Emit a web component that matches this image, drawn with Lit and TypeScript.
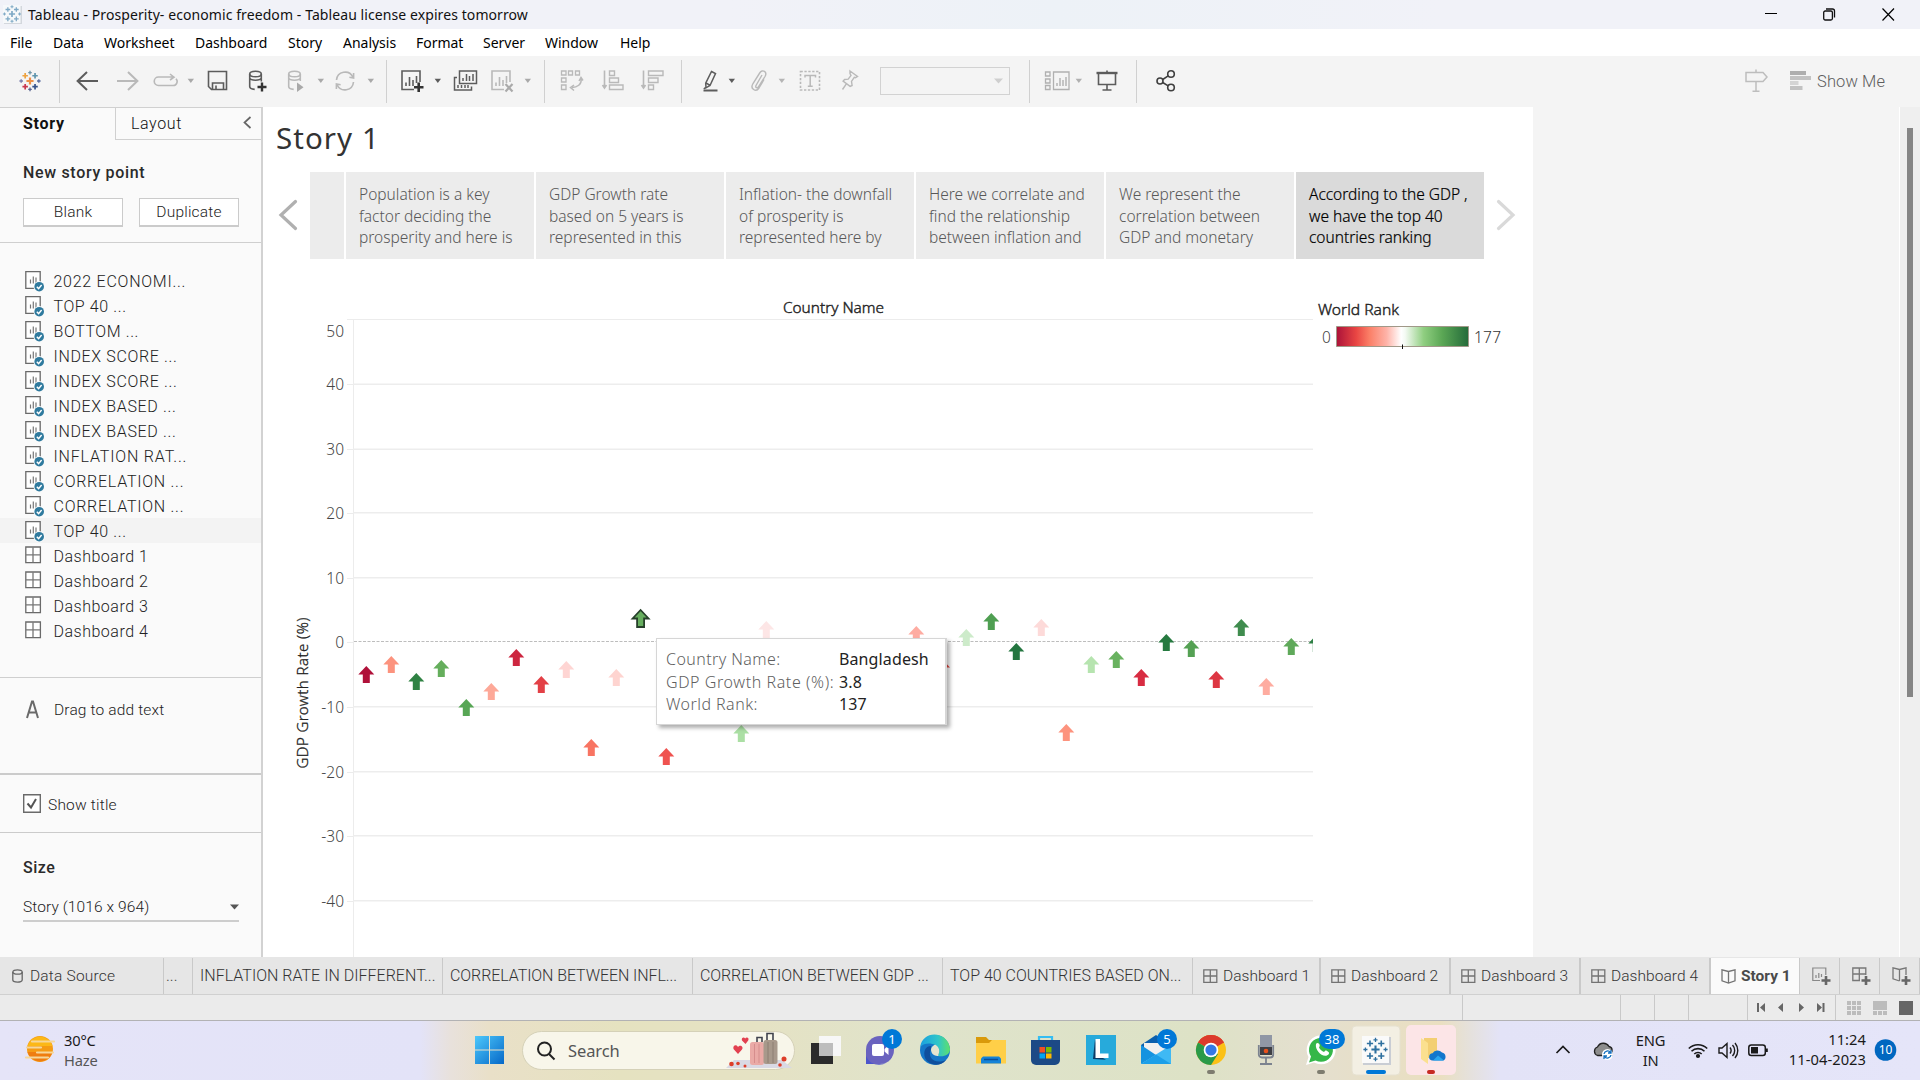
import { LitElement, html, css, svg } from "lit";
import { customElement } from "lit/decorators.js";

const plus = (x: number, y: number, r: number, c: string, w = 1.6) =>
  svg`<path d="M${x - r} ${y}h${r * 2}M${x} ${y - r}v${r * 2}" stroke=${c} stroke-width=${w} fill="none"/>`;

const burst = (cx: number, cy: number, k: number, p: string[], w: number) => svg`
  ${plus(cx, cy, 3.4 * k, p[0], w * 1.3)}
  ${plus(cx, cy - 8 * k, 1.7 * k, p[1], w * 0.8)}${plus(cx, cy + 8 * k, 1.7 * k, p[2], w * 0.8)}
  ${plus(cx - 8.4 * k, cy, 1.7 * k, p[3], w * 0.8)}${plus(cx + 8.4 * k, cy, 1.7 * k, p[4], w * 0.8)}
  ${plus(cx - 4.6 * k, cy - 5 * k, 2.6 * k, p[5], w)}${plus(cx + 4.8 * k, cy - 5 * k, 2.6 * k, p[6], w)}
  ${plus(cx - 4.6 * k, cy + 5.4 * k, 2.6 * k, p[7], w)}${plus(cx + 4.8 * k, cy + 5.4 * k, 2.6 * k, p[8], w)}`;

const blues = Array(9).fill("#4a86ad");
const D = "#5c5c5c";
const L = "#b9b9b9";

const icon = (w: number, body: unknown, c = D) =>
  html`<svg class="ic" width=${w} height="24" viewBox="0 0 ${w} 24" fill="none" stroke=${c} stroke-width="1.6">${body}</svg>`;
const caret = (c: string) => html`<svg class="ic" width="8" height="24" viewBox="0 0 8 24"><path d="M.6 9.8h6.4L3.8 14z" fill=${c}/></svg>`;
const sep = html`<i class="sep"></i>`;

const toolbar = [
  icon(20, burst(10, 12, 1.05, ["#ee8f45", "#6f95a8", "#5a6591", "#7a7fae", "#5a6ea0", "#eda23f", "#5f95ad", "#c9384f", "#37548c"], 1.7)),
  sep,
  icon(22, svg`<path d="M22 12H2M11 3l-9.4 9L11 21" stroke-width="2"/>`),
  icon(22, svg`<path d="M0 12h20M11 3l9.4 9-9.4 9" stroke-width="2"/>`, L),
  icon(26, svg`<path d="M20 8H5.500a4 4 0 0 0 0 8.500H20a4 4 0 0 0 3-6.800M17 5l4 3.200L17 11"/>`, L),
  caret("#a9a9a9"),
  icon(21, svg`<path d="M1.500 2.500h18v18h-15l-3-3zM5.500 20.500v-6.500h11v6.500M9 20v-3.500"/>`),
  icon(19, svg`<ellipse cx="7.500" cy="5" rx="5.800" ry="2.800"/><path d="M1.700 5v12.500c0 1.600 2 2.700 5 2.900M13.300 5v7.500M1.700 9c1 3 10.500 3 11.600 0"/><path d="M9.500 18h9M14 13.500v9" stroke="#333" stroke-width="2.400"/>`),
  icon(17, svg`<ellipse cx="7.500" cy="5" rx="5.800" ry="2.800"/><path d="M1.700 5v12.500c0 1.600 2 2.700 5 2.900M13.300 5v7M1.700 9c1 3 10.500 3 11.600 0"/><path d="M10 13.500l6.500 4.700-6.500 4.800z" fill="#a9a9a9" stroke="none"/>`, L),
  caret("#a9a9a9"),
  icon(22, svg`<path d="M2.500 11a8.600 8.600 0 0 1 16.300-3M19.500 13a8.600 8.600 0 0 1-16.300 3M19.600 4v5l-4.200-.8M2.400 20v-5l4.200.8"/>`, L),
  caret("#a9a9a9"),
  sep,
  icon(24, svg`<path d="M14 20.500H2v-18.500h18V13M6 17v-3.500M9.500 17V8M13 17v-6M16.500 14V7"/><path d="M14 18.300h9.500M18.700 13.500v9.500" stroke="#333" stroke-width="2.600"/>`),
  caret("#5c5c5c"),
  icon(24, svg`<path d="M6.500 2h17v12.500h-17zM10 12V9M13.500 12V5M16.500 12V7M20 12V5M4 8.500H1.500V21h17v-3.500M5 19v-3M8.500 19v-3M12 19v-3M15 19v-3" stroke-width="1.500"/>`),
  icon(24, svg`<path d="M14 20.500H2v-18.500h18V13M6 17v-3.500M9.500 17V8M13 17v-6M16.500 14V7"/><path d="M15.500 15l7 7.500M22.500 15l-7 7.500" stroke="#aaa" stroke-width="2.200"/>`, L),
  caret("#a9a9a9"),
  sep,
  icon(23, svg`<path d="M1.500 2h4.500v4H1.500zM8.500 2h4v4h-4zM15.500 2h4v4h-4zM1.500 9h4.500v4H1.500zM1.500 16h4.500v4.500H1.500z" stroke-width="1.300"/><path d="M21 9.500c1 6-4 9-9 9M19 12l2-3.500 2 3M14 16l-3.500 2.500L14 21.500" stroke-width="1.500"/>`, L),
  icon(22, svg`<path d="M2.500 1.500v17M.5 16l2 3 2-3"/><path d="M7.500 2h5v4.500h-5zM7.500 9h9v4.500h-9zM7.500 16h13.500v4.500H7.500z" stroke-width="1.400"/>`, L),
  icon(23, svg`<path d="M2.500 1.500v17M.5 16l2 3 2-3"/><path d="M7.500 2h14.500v4.500H7.500zM7.500 9h9.500v4.500H7.500zM7.500 16h5v4.500h-5z" stroke-width="1.400"/>`, L),
  sep,
  icon(17, svg`<path d="M1.500 21.500h14" stroke-width="2"/><path d="M9.500 2.500l4 2L8 16.500l-4 2.300-.3-4.600zM4 14l3.800 2.200M3.500 18.500l-1.700 1.500" stroke-width="1.500"/>`),
  caret("#5c5c5c"),
  icon(17, svg`<path d="M12 6L6 16.500c-1 2.300 1.500 3.200 2.600 1.200L15 7.500c2.600-4.500-2.400-8-5.300-3.500L3 14.500c-3.300 5.500 3 9 6 4.500l5-8.500" stroke-width="1.400"/>`, L),
  caret("#b5b5b5"),
  icon(22, svg`<path d="M1.500 2.500h19v18.500h-19z" stroke-dasharray="2.300 1.600"/><path d="M6 8.500V6.500h10.500v2M11.200 6.500V17M8.800 17.300h4.900" stroke-width="1.500"/>`, L),
  icon(18, svg`<path d="M9 2l7.500 5.500-2 1.200-1.200-.4-2.800 4 .6 4.200-2 .9-7-5.300 1.500-1.600 3.600-.3L10 6.500 9 4.500zM5.500 14.600L1.500 20.500" stroke-width="1.400"/>`, L),
  html`<span class="combo"><svg width="9" height="6"><path d="M0 .5h9L4.500 5.500z" fill="#cfcfcf"/></svg></span>`,
  sep,
  icon(26, svg`<path d="M1.500 3h4.500v4H1.500zM1.500 10h4.500v4H1.500zM1.500 16.500h4.500v4H1.500zM9.500 3h15.500v17.500H9.500z" stroke-width="1.300"/><path d="M13 17v-3M16 17V9M19 17v-6M22 17V8" stroke-width="1.400"/>`, "#b0b0b0"),
  caret("#b0b0b0"),
  icon(22, svg`<path d="M.5 4h21" stroke-width="2.400"/><path d="M2.500 4v11.500h17V4M11 1.500V4M11 15.500v5M6.500 21h9"/>`),
  sep,
  icon(20, svg`<circle cx="4" cy="12" r="3"/><circle cx="15" cy="5" r="3.300"/><circle cx="15" cy="18.500" r="3.300"/><path d="M6.700 10.500l5.500-3.600M6.700 13.500l5.500 3.400"/>`, "#3f3f3f"),
  icon(24, svg`<path d="M2 3.500h17l4 4.500-4 4.500H2zM12 .5v3M12 12.500v10M8.500 22.300h7" stroke-width="1.500"/>`, "#bdbdbd"),
  html`<svg class="ic" width="21" height="24"><g fill="#c2c2c2"><path d="M0 2h16v4H0z" fill="#aeaeae"/><path d="M0 7h21v4H0zM0 17h12.500v4H0z"/><path d="M0 12h8.500v4H0z" fill="#d4d4d4"/></g></svg>`,
  html`<span class="showme">Show Me</span>`,
];

const sheets: [string, string][] = [
  ["2022 ECONOMI...", "s-long"], ["TOP 40 ...", "s-top"], ["BOTTOM ...", "s-top"],
  ["INDEX SCORE ...", "s-idx"], ["INDEX SCORE ...", "s-idx"], ["INDEX BASED ...", "s-idx"], ["INDEX BASED ...", "s-idx"],
  ["INFLATION RAT...", "s-inf"], ["CORRELATION ...", "s-long"], ["CORRELATION ...", "s-long"], ["TOP 40 ...", "s-top"],
];
const boards = ["Dashboard 1", "Dashboard 2", "Dashboard 3", "Dashboard 4"];

const sheetIcon = html`<svg width="29" height="25" viewBox="0 0 29 25" fill="none">
  <path d="M.8 3.700h14.400v16.600H.8z" fill="#fff" stroke="#6a6a6a" stroke-width="1.300"/><path d="M5.500 15.500v-4M8.300 15.500v-7M11 15.500v-6" stroke="#777" stroke-width="1.200"/>
  <circle cx="14.200" cy="18.700" r="5.600" fill="#fafafa"/><circle cx="14.200" cy="18.700" r="4.800" fill="#2f7a9e"/><path d="M11.800 18.800l1.800 1.800 3-3.600" stroke="#fff" stroke-width="1.400"/></svg>`;
const gridIcon = html`<svg width="29" height="25" viewBox="0 0 29 25" fill="none"><path d="M.8 4h14.600v15.600H.8z" fill="#fff" stroke="#6a6a6a" stroke-width="1.300"/><path d="M8 4.300v15M1 11.800h14" stroke="#777" stroke-width="1.300"/></svg>`;
const tabGrid = html`<svg width="20" height="15" viewBox="0 0 20 15" fill="none"><path d="M.8 .8h13v12.600H.8zM7.300 1v12.500M1 7h12.800" stroke="#737373" stroke-width="1.300"/></svg>`;
const book = svg`<path d="M7.500 2.500v11.500M7.500 2.500L1 .8v11L7.500 14l6.500-2.200v-11z" stroke="#737373" stroke-width="1.300" fill="none"/>`;

const points = [
  ["Population is a key", "factor deciding the", "prosperity and here is"],
  ["GDP Growth rate", "based on 5 years is", "represented in this"],
  ["Inflation- the downfall", "of prosperity is", "represented here by"],
  ["Here we correlate and", "find the relationship", "between inflation and"],
  ["We represent the", "correlation between", "GDP and monetary"],
  ["According to the GDP ,", "we have the top 40", "countries ranking"],
];

const marks: [number, number, string][] = [
  [366.3, 666, "#b0113a"], [391.3, 656, "#fc937e"], [416.3, 673, "#2f8243"], [441.3, 660, "#65ae5c"],
  [466.3, 699, "#57a655"], [491.3, 683, "#fda898"], [516.3, 649, "#cd2640"], [541.3, 676, "#e34046"],
  [566.3, 661, "#fed5d3"], [591.3, 739, "#f87462"], [616.3, 669, "#fed4d0"],
  [666.3, 748, "#ef5350"], [741.3, 725, "#abdfa4"], [766.3, 621, "#fde6e6"], [916.3, 626, "#feaca2"], [942, 659, "#e8453f"],
  [966.3, 629, "#cdebca"], [991.3, 613, "#4f9f52"], [1016.3, 643, "#247640"], [1041.3, 619, "#fddad9"],
  [1066.3, 724, "#fd937e"], [1091.3, 656, "#b6e4af"], [1116.3, 651, "#69b260"], [1141.3, 669, "#d82c42"],
  [1166.3, 634, "#267a40"], [1191.3, 640, "#55a154"], [1216.3, 671, "#dd3743"], [1241.3, 619, "#3f8c4e"],
  [1266.3, 678, "#feaca0"], [1291.3, 638, "#5fa95a"], [1316.3, 635, "#2e8045"],
];
const arrow = (x: number, y: number) => `M${x} ${y}l8 8.500h-4.500v8.500h-7v-8.500h-4.500z`;
const ticks: [string, number, number][] = [
  ["50", 331, 0], ["40", 384, 384], ["30", 449, 449], ["20", 513, 512.500], ["10", 578, 577.500], ["0", 642, 0],
  ["-10", 707, 706.500], ["-20", 772, 771.500], ["-30", 836, 835.500], ["-40", 901, 900.500],
];

@customElement("app-root")
export class AppRoot extends LitElement {
  static styles = css`
    :host { display: block; width: 1920px; height: 1080px; overflow: hidden; background: #f4f4f4; color: #333; font-family: Roboto, "Liberation Sans", sans-serif; font-weight: 300; font-size: 16px; }
    * { box-sizing: border-box; }
    svg { display: block; overflow: visible; flex: none; }
    .app { display: flex; flex-direction: column; height: 1080px; }
    .title { height: 29px; display: flex; align-items: center; background: linear-gradient(90deg, #f1f2f8 0 38%, #edf2f7 55%, #f1f2f8 75%); color: #111; font: 400 14px/29px "Noto Sans", sans-serif; padding-left: 3px; }
    .title .name { margin-left: 5px; flex: 1; letter-spacing: .085px; }
    .wins { display: flex; gap: 47px; padding-right: 26px; }
    .menu { height: 27px; background: #fff; color: #000; padding-left: 10px; display: grid; grid-template-columns: 43px 51px 91px 93px 55px 73px 67px 62px 75px 60px; font: 400 14px/27px "Noto Sans", sans-serif; letter-spacing: -.02px; }
    .tools { height: 51px; background: #f4f4f4; padding: 0 0 1px 20px; display: grid; align-items: center;
      grid-template-columns: 39px 17px 41px 36px 34px 20px 41px 39px 30px 17px 33px 19px 14px 34px 19px 37px 34px 20px 16px 42px 39px 40px 21px 26px 22px 28px 21px 42px 39px 149px 15px 31px 21px 40px 20px 588px 46px 27px 90px; }
    .sep { width: 1px; height: 43px; background: #d0d0d0; }
    .combo { width: 130px; height: 28px; border: 1px solid #d2d2d2; display: flex; align-items: center; justify-content: flex-end; padding-right: 6px; }
    .showme { color: #5e5e5e; font-weight: 300; font-size: 16.500px; letter-spacing: .1px; }
    .work { height: 850px; display: flex; }

    .side { width: 263px; background: #fafafa; border-right: 2px solid #d2d2d2; border-top: 1px solid #d0d0d0; display: flex; flex-direction: column; }
    .sidetabs { height: 32px; display: flex; }
    .st { width: 115px; padding-left: 23px; font-weight: 700; font-size: 16px; line-height: 32px; color: #111; letter-spacing: .75px; }
    .lt { flex: 1; border-left: 1px solid #d0d0d0; border-bottom: 1px solid #d0d0d0; padding: 0 9px 0 15px; line-height: 32px; display: flex; justify-content: space-between; color: #111; font-weight: 300; letter-spacing: .6px; }
    .nsp { height: 103px; padding: 23px 22px 0 23px; border-bottom: 1px solid #cfcfcf; }
    .h { font-weight: 500; letter-spacing: .67px; line-height: 20px; color: #2b2b2b; font-size: 16px; }
    .btns { display: flex; justify-content: space-between; margin-top: 15px; }
    .btn { width: 100px; height: 29px; border: 1px solid #cbcbcb; border-bottom-width: 2px; background: #fff; text-align: center; line-height: 26px; font-weight: 300; color: #222; font-size: 15.500px; letter-spacing: .2px; }
    .list { padding-top: 25px; height: 435px; border-bottom: 1px solid #cfcfcf; }
    .row { height: 25px; padding-left: 24.500px; display: flex; line-height: 27px; font-size: 16px; color: #222; white-space: pre; letter-spacing: .5px; }
    .row.sel { background: #f3f3f3; }
    .s-long { letter-spacing: .74px; } .s-top { letter-spacing: .6px; } .s-idx { letter-spacing: .65px; } .s-inf { letter-spacing: .82px; }
    .drag { height: 97px; border-bottom: 2px solid #cbcbcb; padding: 21px 0 0 26px; display: flex; line-height: 22px; color: #222; font-weight: 300; font-size: 15.500px; letter-spacing: .15px; }
    .drag svg { margin-right: 15px; }
    .show { height: 58px; border-bottom: 1px solid #cbcbcb; display: flex; align-items: center; padding-left: 23px; gap: 7px; font-size: 15.500px; font-weight: 300; color: #222; }
    .show span { letter-spacing: .2px; padding-top: 2px; }
    .size { padding: 25px 22px 0 23px; }
    .pick { display: flex; justify-content: space-between; align-items: center; margin-top: 10px; height: 34px; padding-top: 6px; border-bottom: 2px solid #cdcdcd; font-size: 15.500px; font-weight: 300; color: #222; letter-spacing: .1px; }
    .h.sz { letter-spacing: .5px; }

    .canvas { width: 1270px; background: #fff; display: flex; flex-direction: column; }
    .canvas h1 { margin: 0; height: 65px; padding: 10px 0 0 13px; font: 400 29.500px/42px "Noto Sans", sans-serif; letter-spacing: 1.050px; color: #333; }
    .nav { height: 87px; display: flex; gap: 2px; padding-left: 16px; }
    .chev { width: 29px; display: flex; align-items: center; padding-bottom: 2px; }
    .part { width: 34px; background: #ececec; }
    .card { width: 188px; background: #ececec; padding: 12px 0 0 13px; font: 300 15.500px/21.500px "Noto Sans", sans-serif; color: #585858; white-space: nowrap; }
    .card.on { background: #dadada; color: #000; -webkit-text-stroke: .2px #000; letter-spacing: -.02px; }
    .card.on + .chev { padding-left: 11px; }
    .chartwrap { position: relative; height: 698px; }
    .chart text { font-family: "Noto Sans", sans-serif; }
    .tip { position: absolute; left: 393px; top: 379px; width: 291px; height: 87px; background: #fff; border: 1px solid #d6d6d6; border-right-width: 2px; box-shadow: 3px 3px 4px rgba(0,0,0,.32); padding: 8px 0 0 9px; display: grid; grid-template-columns: 173px 1fr; grid-auto-rows: 22.500px; font: 300 16px/24px "Noto Sans", sans-serif; letter-spacing: .58px; color: #5f5f5f; white-space: nowrap; }
    .tip b { font-weight: 400; color: #222; letter-spacing: .12px; }
    .tip .c1 { letter-spacing: .42px; }
    .tip .c3 { letter-spacing: .46px; }
    .void { flex: 1; border-right: 1px solid #fff; }
    .scroll { width: 20px; background: #efefef; padding: 21px 0 0 7px; }
    .thumb { width: 6px; height: 569px; background: #868686; }

    .tabs { height: 38px; background: #e6e6e6; border-bottom: 1px solid #d0d0d0; display: flex; color: #444; font-size: 16px; line-height: 36px; padding-top: 1px; }
    .tab { flex: none; border-right: 1px solid #c9c9c9; padding-left: 7px; white-space: nowrap; display: flex; align-items: center; overflow: hidden; height: 36px; }
    .ds { width: 164px; padding-left: 12px; font-size: 15.500px; gap: 7px; color: #333; letter-spacing: .2px; }
    .dots { width: 29px; padding-left: 2px; }
    .ws { width: 250px; color: #333; }
    .t1 { letter-spacing: .02px; } .t2 { letter-spacing: -.08px; } .t3 { letter-spacing: -.1px; } .t4 { letter-spacing: 0; }
    .db { width: 130px; padding-left: 10px; border-right: 2px solid #c9c9c9; font-size: 15.500px; color: #333; letter-spacing: .05px; }
    .d1 { width: 128px; }
    .stab { width: 89px; padding-left: 10px; background: #fafafa; font-weight: 700; font-size: 15.500px; gap: 5px; color: #4a4a4a; }
    .add { width: 40px; padding-left: 12px; }
    .status { height: 25px; background: #ebebeb; display: grid; grid-template-columns: 1463px 158px 34px 34px 59px 88px 84px; }
    .cell { border-right: 1px solid #c9c9c9; display: flex; align-items: center; }
    .cell:last-child { border: 0; }

    .task { height: 60px; border-top: 1px solid #b2b2b4; padding-left: 25px; display: grid; align-items: center; color: #1a1a1a;
      grid-template-columns: 450px 47px 289px 55px 54px 56px 55px 55px 55px 55px 62px 48px 46px 54px 150px 37px 37px 58px 30px 30px 30px 97px 40px;
      background: linear-gradient(90deg, #e5e4f8 0, #e3e3f8 420px, #e8e1dc 450px, #e9e0c8 490px, #e5e2c0 620px, #e5e2c4 760px, #dfe3cb 920px, #dde2c6 1200px, #e4dfcf 1310px, #eadfc0 1440px, #e5e1dc 1470px, #e3e3f7 1500px, #e5e5f9 1920px);
      font: 400 14.700px/20px "Noto Sans", sans-serif; }
    .weather { display: flex; gap: 9px; margin-top: -2px; }
    .weather span { letter-spacing: -.2px; }
    .weather em { font-style: normal; color: #555; letter-spacing: -.2px; }
    .weather div { display: flex; flex-direction: column; }
    .search { width: 273px; height: 39px; border-radius: 20px; background: #f8f6ea; border: 1px solid #d5d1b8; display: flex; align-items: center; padding-left: 13px; font-size: 16.500px; color: #555; gap: 12px; }
    .search span { flex: 1; letter-spacing: -.1px; }
    .lang { text-align: center; width: 40px; justify-self: center; margin-right: 17px; letter-spacing: -.2px; margin-top: -1px; }
    .clock { text-align: right; padding-right: 9px; white-space: nowrap; letter-spacing: .05px; margin: -3px 0 0 -10px; }
  `;

  private chart() {
    return html`<svg class="chart" width="1270" height="698" viewBox="263 259 1270 698">
      <defs>
        <linearGradient id="rank"><stop offset="0" stop-color="#ab1239"/><stop offset=".15" stop-color="#e94643"/><stop offset=".25" stop-color="#fb7f67"/><stop offset=".38" stop-color="#feb3a8"/><stop offset=".49" stop-color="#fff"/><stop offset=".52" stop-color="#f4faf3"/><stop offset=".66" stop-color="#8fce80"/><stop offset=".8" stop-color="#5ba755"/><stop offset="1" stop-color="#246b3a"/></linearGradient>
        <clipPath id="plot"><path d="M353 300h960v657H353z"/></clipPath>
      </defs>
      <path d="M347 319.500h966M353.500 319v638" stroke="#ececec" fill="none"/>
      ${ticks.map(([t, y, g]) => svg`
        <text x="344" y=${y + 6} text-anchor="end" font-size="15.500" font-weight="300" fill="#444">${t}</text>
        ${g ? svg`<path d="M353 ${g + 0.25}h960" stroke="#ededed" stroke-width="1.300"/>` : ""}
        ${t !== "50" ? svg`<path d="M347 ${y + 0.5}h6" stroke="#ececec"/>` : ""}`)}
      <path d="M354 641.500h959" stroke="#bdbdbd" stroke-dasharray="3 1.500"/>
      <text x="783" y="313" font-size="15" textLength="101" lengthAdjust="spacingAndGlyphs" fill="#222" stroke="#222" stroke-width=".4">Country Name</text>
      <text transform="translate(308 768.500) rotate(-90)" font-size="15" textLength="151" fill="#222" stroke="#222" stroke-width=".3">GDP Growth Rate (%)</text>
      <g clip-path="url(#plot)">${marks.map(([x, y, c]) => svg`<path d=${arrow(x, y)} fill=${c}/>`)}</g>
      <path d=${arrow(640.6, 610)} fill="#67ae5f" stroke="#26402a" stroke-width="1.800"/>
      <text x="1318" y="315" font-size="15" textLength="81" lengthAdjust="spacingAndGlyphs" fill="#222" stroke="#222" stroke-width=".4">World Rank</text>
      <text x="1322" y="343" font-size="15.500" fill="#444" font-weight="300">0</text>
      <text x="1474" y="343" font-size="15.500" fill="#333" font-weight="300" textLength="27">177</text>
      <path d="M1336.500 326.500h132v20h-132z" fill="url(#rank)" stroke="#a09888"/>
      <path d="M1402.500 344.500v4.500" stroke="#111"/>
    </svg>`;
  }

  private icons() {
    return [
      html`<svg width="30" height="59" viewBox="0 0 30 59"><defs><linearGradient id="st" x2="1" y2="1"><stop stop-color="#4cc8fb"/><stop offset="1" stop-color="#0668c8"/></linearGradient></defs><path d="M0 15h14v13.500H0zM15 15H29v13.500H15zM0 29.500h14V43H0zM15 29.500H29V43H15z" fill="url(#st)"/></svg>`,
      html`<div class="search"><svg width="20" height="20" viewBox="0 0 20 20" fill="none" stroke="#222" stroke-width="2"><circle cx="8.500" cy="8" r="6.500"/><path d="M13 13l5.500 5.500"/></svg><span>Search</span>
        <svg width="68" height="37" viewBox="0 0 68 37"><path d="M0 36l8-8h48l10 8z" fill="#d9d9e4"/><path d="M31 11V5.500h5V10M41 9V1.500h6V8" fill="none" stroke="#40434e" stroke-width="1.600"/><rect x="24" y="10" width="14" height="23" rx="2.500" fill="#eaaaa6"/><rect x="37.500" y="8" width="14" height="24" rx="2.500" fill="#a8998b"/><path d="M28.500 12v19M33 12v19" stroke="#d68e8d"/><path d="M42 10v21M47 10v21" stroke="#8d7f72"/><path d="M12 22l-4.500-5c-1-4 3-5 4.500-2 2-3 6-.5 4 2.500zM19.500 12l-3.500-3.500c-1-3 2-4 3.200-2 1-2 4.500-1 3 2z" fill="#e2404f"/><g fill="#dd3e2a"><circle cx="5.500" cy="32" r="2.300"/><circle cx="12" cy="31.500" r="1.800"/><circle cx="19" cy="34" r="1.500"/><circle cx="58" cy="27" r="2.500"/><circle cx="54" cy="33" r="1.800"/></g></svg></div>`,
      html`<svg width="30" height="59"><path d="M0 22h22v21H0z" fill="#2b2b2b"/><path d="M8 15h22v20H8z" fill="#f7f7f7"/><path d="M8 22h14v13H8z" fill="#bdbdbd"/></svg>`,
      html`<svg width="40" height="59"><path d="M0 43V29a14 14 0 1 1 14 14z" fill="#6a63bf"/><path d="M0 43V35a14 14 0 0 0 26 0c-2 6-7 8-12 8z" fill="#4d55cc"/><rect x="6" y="23" width="12" height="12" rx="2" fill="#fff"/><path d="M18.500 28l4-3.500v9.500l-4-3.500z" fill="#fff"/><circle cx="26" cy="18" r="10" fill="#0078d7"/><text x="26" y="22.500" text-anchor="middle" font-size="13" fill="#fff">1</text></svg>`,
      html`<svg width="30" height="59"><defs><linearGradient id="eg" x2="1"><stop stop-color="#1ba0e0"/><stop offset=".6" stop-color="#30c6c8"/><stop offset="1" stop-color="#5fe06a"/></linearGradient></defs><circle cx="15" cy="29" r="15" fill="#1577c8"/><path d="M.3 26C2 9 28 9 30 28c0 6-6 8-12 7-1-1 2-3 1-7-2-6-14-8-18.700-2z" fill="url(#eg)"/><path d="M11 28c-4 8 3 16 15 11-5 7-17 6-21-2-2-6 0-12 6-12z" fill="#0f4f9d"/><path d="M18.500 35c-1-1 1.500-3 .5-7-.6-1.800-2-3.200-3.700-4.200-3 .7-5 3.700-4 6.700 1 3.500 4 4.500 7.200 4.500z" fill="#e4e4cf"/></svg>`,
      html`<svg width="30" height="59"><path d="M0 16h10l3 3h17v22H0z" fill="#d99a0b"/><path d="M0 22h13l3-3h14v23.500H0z" fill="#ffcf48"/><path d="M5 42.500v-5l2-2h16l2 2v5z" fill="#1583d8"/><path d="M8 38.500h14" stroke="#0b4f98" stroke-width="1.500"/></svg>`,
      html`<svg width="30" height="59"><path d="M8 20v-4h13v4" fill="none" stroke="#35bdf2" stroke-width="2.200"/><path d="M0 19h29v20a5 5 0 0 1-5 5H5a5 5 0 0 1-5-5z" fill="#1c4a86"/><path d="M8.500 26h5.500v5.500H8.500z" fill="#f25022"/><path d="M15 26h5.500v5.500H15z" fill="#7fba00"/><path d="M8.500 32.500h5.500v5H8.500z" fill="#00a4ef"/><path d="M15 32.500h5.500v5H15z" fill="#ffb900"/></svg>`,
      html`<svg width="30" height="59"><path d="M0 14h30v30H0z" fill="#27aadb"/><path d="M9 18L7 38l13 .8-7-4z" fill="#0b3b66"/><path d="M9.500 18H14v14.500h8.500V37H9.500z" fill="#fff"/></svg>`,
      html`<svg width="40" height="59"><path d="M0 24l15-10 15 10v3H0z" fill="#0a5fae"/><path d="M3 22h24v14H3z" fill="#f0f0f0"/><path d="M0 24l15 10-15 9z" fill="#1593e0"/><path d="M30 24L0 43h30z" fill="#3fb9f4"/><path d="M0 43l15-9.500L30 43z" fill="#1c9fe8"/><circle cx="26" cy="18" r="10" fill="#0078d7"/><text x="26" y="22.500" text-anchor="middle" font-size="13" fill="#fff">5</text></svg>`,
      html`<svg width="30" height="59"><circle cx="15" cy="29" r="15" fill="#fbc116"/><path d="M15 29L2 21.500A15 15 0 0 1 28 21.500z" fill="#dc3a2c"/><path d="M15 29L2 21.500A15 15 0 0 0 15 44l7-11z" fill="#2a9a48"/><path d="M2 21.500A15 15 0 0 1 28 21.500H15z" fill="#dc3a2c"/><circle cx="15" cy="29" r="7.300" fill="#fff"/><circle cx="15" cy="29" r="5.600" fill="#3578e5"/><rect x="11" y="49" width="8" height="4" rx="2" fill="#7e7c70"/></svg>`,
      html`<svg width="17" height="59"><path d="M2 14h12v12H2z" fill="#9097a5"/><path d="M2 26h12v8H2z" fill="#3e3f45"/><circle cx="8" cy="30" r="2.300" fill="#e8511c"/><path d="M.8 24v9.500a3 3 0 0 0 3 3h8.400a3 3 0 0 0 3-3V24M8 36.500V43M2 43h12" fill="none" stroke="#7c838f" stroke-width="1.800"/></svg>`,
      html`<svg width="40" height="59"><path d="M0 44l2.500-8A14.500 14.500 0 1 1 8 41.500z" fill="#fff"/><path d="M3 41.500l2-6A12 12 0 1 1 9.500 39.500z" fill="#35b749"/><path d="M10 23c1-2 3-1 3.500.5s0 2-.5 3c1 2 3 4 5 4.500 1-1 1.500-2 3-1s3 1.500 1.500 3.500c-5 4.500-14-4-12.500-10.500z" fill="#fff"/><rect x="13" y="8" width="26" height="20" rx="10" fill="#0078d7"/><text x="26" y="22.500" text-anchor="middle" font-size="13" fill="#fff">38</text><rect x="11" y="49" width="8" height="4" rx="2" fill="#7e7c70"/></svg>`,
      html`<svg width="48" height="59"><rect y="5" width="48" height="49" rx="4" fill="#f3efe3" stroke="#e6e1d0"/><path d="M11 16h28v28H11z" fill="#c9cdd4"/><path d="M10 15h27v27H10z" fill="#fafafa"/>${burst(23.500, 28.500, 1.200, blues.map(() => "#2f709f"), 1.600)}<rect x="14" y="49" width="20" height="4" rx="2" fill="#0078d7"/></svg>`,
      html`<svg width="50" height="59"><rect y="4" width="50" height="50" rx="5" fill="#fce5e7"/><path d="M18 17h13v20H18z" fill="#f3cf72"/><path d="M15 17l7 5v21l-7-5z" fill="#fbe08f"/><path d="M26 39.500a3.700 3.700 0 0 1 .5-7.300 6 6 0 0 1 9.500-.7 4.200 4.200 0 0 1 1 8z" fill="#1277cc"/><path d="M27 39.500l5-5 6 5z" fill="#29a7ee"/><rect x="21" y="49" width="8" height="4" rx="2" fill="#c62a22"/></svg>`,
      html`<svg width="14" height="59"><path d="M.5 32L7 25.500 13.500 32" fill="none" stroke="#1a1a1a" stroke-width="1.700"/></svg>`,
      html`<svg width="22" height="59"><path d="M4.500 34.500a4.500 4.500 0 0 1 0-8.500 6.500 6.500 0 0 1 11.500-.5 4 4 0 0 1 3 4.500v4.500z" fill="#8d8d8d" stroke="#222" stroke-width="1.300"/><circle cx="14.500" cy="33.500" r="5.500" fill="#fff"/><path d="M11 33a3.600 3.600 0 0 1 6.500-1.500M18 34a3.600 3.600 0 0 1-6.500 1.500M18 29v3h-3M11 38v-3h3" fill="none" stroke="#0f6cbd" stroke-width="1.300"/></svg>`,
      html`<div class="lang">ENG<br>IN</div>`,
      html`<svg width="20" height="59" fill="none" stroke="#1a1a1a" stroke-width="1.600"><path d="M.8 27.500a13 13 0 0 1 18.400 0M3.500 30.300a9.200 9.200 0 0 1 13 0M6.300 33a5.300 5.300 0 0 1 7.400 0"/><circle cx="10" cy="35" r="1.300" fill="#1a1a1a"/></svg>`,
      html`<svg width="20" height="59" fill="none" stroke="#1a1a1a" stroke-width="1.400"><path d="M1 27h3l5-4.500v14L4 32H1zM12 26.500a5 5 0 0 1 0 6M14.500 24a8 8 0 0 1 0 11M17 22a11.500 11.500 0 0 1 0 15"/></svg>`,
      html`<svg width="20" height="59"><rect x=".8" y="24" width="16.500" height="10.500" rx="2.500" fill="none" stroke="#1a1a1a" stroke-width="1.500"/><rect x="3" y="26" width="7" height="6.500" fill="#1a1a1a"/><path d="M18 27.500h1.800v3.500H18z" fill="#1a1a1a"/></svg>`,
      html`<div class="clock">11:24<br>11-04-2023</div>`,
      html`<svg width="22" height="59"><circle cx="10.500" cy="29" r="10.800" fill="#0067c0"/><text x="10.500" y="33.300" text-anchor="middle" font-size="12" fill="#fff">10</text></svg>`,
    ];
  }

  render() {
    return html`<div class="app">
      <div class="title">
        <svg width="20" height="20" viewBox="0 0 20 20"><path d="M1 1h18v18H1z" fill="#d3d7dd"/><path d="M0 0h17.500v18H0z" fill="#f6f8fa"/>${burst(9, 9, .9, blues.map(() => "#7fa9c6"), 1.300)}</svg>
        <span class="name">Tableau - Prosperity- economic freedom - Tableau license expires tomorrow</span>
        <div class="wins">
          <svg width="12" height="13"><path d="M1 5.500h12" stroke="#000"/></svg>
          <svg width="12" height="13" fill="none" stroke="#111" stroke-width="1.300"><rect x=".7" y="3" width="8.700" height="9" rx="1.500"/><path d="M3 1h6.500a2 2 0 0 1 2 2v6.500"/></svg>
          <svg width="12" height="13" stroke="#000" stroke-width="1.200"><path d="M.5 .5l11.500 12M12 .5L.5 12.500"/></svg>
        </div>
      </div>
      <div class="menu">${["File", "Data", "Worksheet", "Dashboard", "Story", "Analysis", "Format", "Server", "Window", "Help"].map(m => html`<span>${m}</span>`)}</div>
      <div class="tools">${toolbar}</div>
      <div class="work">
        <div class="side">
          <div class="sidetabs"><div class="st">Story</div><div class="lt">Layout<svg width="9" height="25" viewBox="0 0 9 25"><path d="M7.500 9L1.500 14.500 7.500 20" fill="none" stroke="#666" stroke-width="1.700"/></svg></div></div>
          <div class="nsp"><div class="h">New story point</div><div class="btns"><div class="btn">Blank</div><div class="btn">Duplicate</div></div></div>
          <div class="list">
            ${sheets.map(([t, w], i) => html`<div class="row ${i === 10 ? "sel" : ""}">${sheetIcon}<span class=${w}>${t}</span></div>`)}
            ${boards.map(t => html`<div class="row">${gridIcon}<span>${t}</span></div>`)}
          </div>
          <div class="drag"><svg width="13" height="22" viewBox="0 0 13 22"><path d="M1 19L6 2.500h1L12 19M3 13.500h7" fill="none" stroke="#6a6a6a" stroke-width="2"/></svg>Drag to add text</div>
          <div class="show"><svg width="18" height="19"><path d="M.7 .7h16.600v17.600H.7z" fill="#fff" stroke="#6a6a6a" stroke-width="1.400"/><path d="M4.500 9.500l3.500 4L13 5" fill="none" stroke="#555" stroke-width="2"/></svg><span>Show title</span></div>
          <div class="size"><div class="h sz">Size</div><div class="pick">Story (1016 x 964)<svg width="9" height="6"><path d="M0 .5h9L4.500 5.500z" fill="#555"/></svg></div></div>
        </div>
        <div class="canvas">
          <h1>Story 1</h1>
          <div class="nav">
            <div class="chev"><svg width="18" height="30"><path d="M16.500 1.500L2 15l14.500 13.500" fill="none" stroke="#b0b0b0" stroke-width="3.200" stroke-linecap="round"/></svg></div>
            <div class="part"></div>
            ${points.map((p, i) => html`<div class="card ${i === 5 ? "on" : ""}">${p.map((l, j) => html`${j ? html`<br>` : ""}${l}`)}</div>`)}
            <div class="chev"><svg width="18" height="30"><path d="M1.500 1.500L16 15 1.500 28.500" fill="none" stroke="#d9d9d9" stroke-width="3.200" stroke-linecap="round"/></svg></div>
          </div>
          <div class="chartwrap">${this.chart()}
            <div class="tip"><span class="c1">Country Name:</span><b>Bangladesh</b><span>GDP Growth Rate (%):</span><b>3.8</b><span class="c3">World Rank:</span><b>137</b></div>
          </div>
        </div>
        <div class="void"></div>
        <div class="scroll"><div class="thumb"></div></div>
      </div>
      <div class="tabs">
        <div class="tab ds"><svg width="11" height="14" viewBox="0 0 11 14" fill="none" stroke="#666" stroke-width="1.300"><ellipse cx="5.500" cy="3" rx="4.700" ry="2.200"/><path d="M.8 3v8c0 2.700 9.400 2.700 9.400 0V3"/></svg>Data Source</div>
        <div class="tab dots">...</div>
        <div class="tab ws t1">INFLATION RATE IN DIFFERENT...</div>
        <div class="tab ws t2">CORRELATION BETWEEN INFL...</div>
        <div class="tab ws t3">CORRELATION BETWEEN GDP ...</div>
        <div class="tab ws t4">TOP 40 COUNTRIES BASED ON...</div>
        ${boards.map((b, i) => html`<div class="tab db ${i ? "" : "d1"}">${tabGrid}${b}</div>`)}
        <div class="tab stab"><svg width="15" height="15">${book}</svg>Story 1</div>
        <div class="tab add"><svg width="19" height="18" viewBox="0 0 19 18" fill="none"><path d="M8 13.500H.8V1h13v7M4 11V8M6.800 11V6M9.500 10V7" stroke="#888" stroke-width="1.200"/><path d="M9.500 13.500h9M14 9v9" stroke="#666" stroke-width="2.600"/></svg></div>
        <div class="tab add"><svg width="19" height="18" viewBox="0 0 19 18" fill="none"><path d="M8 13.500H.8V1h13v7M7.300 1v12M1 7h12.800" stroke="#777" stroke-width="1.300"/><path d="M9.500 13.500h9M14 9v9" stroke="#666" stroke-width="2.600"/></svg></div>
        <div class="tab add"><svg width="19" height="18" viewBox="0 0 19 18" fill="none"><path d="M7.500 2.500v11.500M7.500 2.500L1 .8v11L7.500 14M7.500 2.500L14 .8V8" stroke="#777" stroke-width="1.300"/><path d="M9.500 13.500h9M14 9v9" stroke="#666" stroke-width="2.600"/></svg></div>
      </div>
      <div class="status">
        <div class="cell"></div><div class="cell"></div><div class="cell"></div><div class="cell"></div><div class="cell"></div>
        <div class="cell"><svg width="80" height="25" fill="#666"><path d="M9 8h2v9H9zM17 8v9l-5-4.500zM35 8v9l-5-4.500zM51 8v9l5-4.500zM69 8v9l5-4.500zM74.500 8h2v9h-2z"/></svg></div>
        <div class="cell"><svg width="84" height="25" fill="#bcbcbc"><path d="M11 6h4v4h-4zM16 6h4v4h-4zM21 6h4v4h-4zM11 11h4v4h-4zM16 11h4v4h-4zM21 11h4v4h-4zM11 16h4v4h-4zM16 16h4v4h-4zM21 16h4v4h-4zM37 6h14v9H37zM37 16h4v4h-4zM42 16h4v4h-4zM47 16h4v4h-4z"/><path d="M63 6h14v14H63z" fill="#666"/></svg></div>
      </div>
      <div class="task">
        <div class="weather"><svg width="30" height="40" viewBox="0 0 30 40"><circle cx="15" cy="19" r="13" fill="#f59b14"/><path d="M2.500 16a13 13 0 0 1 25 0z" fill="#fcb817"/><path d="M2.500 22a13 13 0 0 0 25 0z" fill="#ef7d10"/><path d="M7 11.500h22M2 17.500h14M12 22.500h16M1 27.500h22" stroke="#f6d79a" stroke-width="2.200" stroke-linecap="round"/></svg><div><span>30°C</span><em>Haze</em></div></div>
        ${this.icons()}
      </div>
    </div>`;
  }
}
